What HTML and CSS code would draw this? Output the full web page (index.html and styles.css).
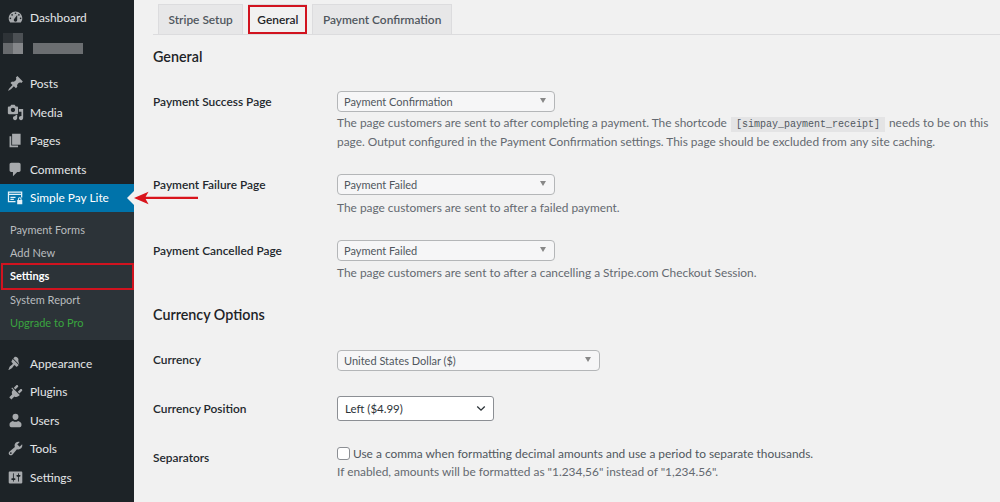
FILE: index.html
```html
<!DOCTYPE html>
<html lang="en">
<head>
  <meta charset="UTF-8" />
  <title>Simple Pay Lite Settings</title>
  <link rel="stylesheet" href="styles.css">
</head>
<body>
  <div class="layout">
    <aside class="sidebar">
      <ul class="menu menu-top">
        <li><svg class="icon" viewBox="0 0 20 20"><path fill-rule="evenodd" d="M3.76 16h12.48c1.1-1.37 1.76-3.11 1.76-5 0-4.42-3.58-8-8-8s-8 3.58-8 8c0 1.89.66 3.63 1.76 5zM10 4c.55 0 1 .45 1 1s-.45 1-1 1-1-.45-1-1 .45-1 1-1zM6 6c.55 0 1 .45 1 1s-.45 1-1 1-1-.45-1-1 .45-1 1-1zm8 0c.55 0 1 .45 1 1s-.45 1-1 1-1-.45-1-1 .45-1 1-1zm-5.370 5.550L12 7v6c0 1.100-.9 2-2 2s-2-.9-2-2c0-.57.24-1.080.63-1.450zM4 10c.55 0 1 .45 1 1s-.45 1-1 1-1-.45-1-1 .45-1 1-1zm12 0c.55 0 1 .45 1 1s-.45 1-1 1-1-.45-1-1 .45-1 1-1z"/></svg>Dashboard</li>
      </ul>
      <div class="blurred"><span class="blur-a"></span><span class="blur-b"></span><span class="blur-c"></span></div>
      <ul class="menu">
        <li><svg class="icon" viewBox="0 0 20 20"><path d="M10.440 3.020l1.820-1.820 6.360 6.350-1.830 1.820c-1.050-.68-2.480-.57-3.410.36l-.75.75c-.92.93-1.040 2.350-.35 3.410l-1.830 1.820-2.410-2.410-2.800 2.790c-.42.42-3.380 2.710-3.800 2.290s1.860-3.390 2.280-3.810l2.790-2.790L4.100 9.360l1.830-1.820c1.050.69 2.480.57 3.400-.36l.75-.75c.93-.92 1.050-2.350.36-3.410z"/></svg>Posts</li>
        <li><svg class="icon" viewBox="0 0 20 20"><path fill-rule="evenodd" d="M13 11V4c0-.55-.45-1-1-1h-1.670L9 1H5L3.670 3H2c-.55 0-1 .45-1 1v7c0 .55.45 1 1 1h10c.55 0 1-.45 1-1zM7 4.500c1.380 0 2.500 1.120 2.500 2.500S8.380 9.500 7 9.500 4.500 8.380 4.500 7 5.620 4.500 7 4.500z"/><path d="M14 6h5v10.500c0 1.380-1.120 2.500-2.500 2.500S14 17.880 14 16.500s1.120-2.500 2.500-2.500c.17 0 .34.020.5.050V9h-3V6zm-4 8.050V13h2v3.500c0 1.380-1.120 2.500-2.500 2.500S7 17.880 7 16.500 8.120 14 9.500 14c.17 0 .34.020.5.050z"/></svg>Media</li>
        <li><svg class="icon" viewBox="0 0 20 20"><path d="M6 15V2h10v13H6zm-1 1h8v2H3V5h2v11z"/></svg>Pages</li>
        <li><svg class="icon" viewBox="0 0 20 20"><path d="M5 2h9c1.100 0 2 .9 2 2v7c0 1.100-.9 2-2 2h-2l-5 5v-5H5c-1.100 0-2-.9-2-2V4c0-1.100.9-2 2-2z"/></svg>Comments</li>
        <li class="current"><svg class="icon" viewBox="0 0 20 20"><path fill-rule="evenodd" d="M1 3h17v7h-1.500V7h-14v7H10v1.500H1zm1.500 1.500v1h14v-1zM4 9h6v1.500H4zm0 2.500h4V13H4z"/><path fill-rule="evenodd" d="M12 13h.8v-1a2.200 2.200 0 0 1 4.400 0v1h.8v5h-6zm2-1v1h2v-1a1 1 0 0 0-2 0z"/></svg>Simple Pay Lite</li>
      </ul>
      <ul class="submenu">
        <li>Payment Forms</li>
        <li>Add New</li>
        <li class="active">Settings</li>
        <li>System Report</li>
        <li class="upgrade">Upgrade to Pro</li>
      </ul>
      <ul class="menu menu-bottom">
        <li><svg class="icon" viewBox="0 0 20 20"><path d="M14.480 11.060L7.410 3.990l1.500-1.500c.5-.56 2.300-.47 3.540.77 1.210 1.210 1.320 3.030.77 3.540zM6.700 4.700l7.070 7.070-1.770 1.770c-.39.39-1.020.39-1.410 0L9.530 12.480c-.39-.39-1.030-.39-1.420 0-.6.6-1.110 1.430-1.690 2.210-.26.35-.53.7-.84 1.010C4.500 16.800 3 17.400 1.500 17.500c1-1.500 1-3 1.800-4.100.31-.31.66-.58 1.010-.84.78-.58 1.610-1.090 2.210-1.690.39-.39.39-1.030 0-1.420L5.460 8.390c-.39-.39-.39-1.020 0-1.410z"/></svg>Appearance</li>
        <li><svg class="icon" viewBox="0 0 20 20"><path d="M13.110 4.360L9.870 7.600 8 5.730l3.240-3.240c.35-.34 1.050-.2 1.560.32.52.51.66 1.210.31 1.550zM17.800 9.050l-3.240 3.240-1.870-1.870 3.240-3.240c.34-.35 1.040-.21 1.550.31.52.51.66 1.210.32 1.560zM5.110 6.130l.91-.91 9.010 9.010-.91.91c-1.420 1.420-3.860 1.680-5.440.7l-3.530 3.530-2.490-2.490 3.530-3.530c-.98-1.580-.72-4.020.92-5.220z"/></svg>Plugins</li>
        <li><svg class="icon" viewBox="0 0 20 20"><path d="M10 2a3.500 3.500 0 0 1 3.500 3.500c0 2-1.300 4-3.500 4s-3.500-2-3.500-4A3.500 3.500 0 0 1 10 2zM3 16v-2c0-1.500 2-3 4-3.500.8.700 1.800 1 3 1s2.200-.3 3-1c2 .5 4 2 4 3.500v2c0 1-1 2-2 2H5c-1 0-2-1-2-2z"/></svg>Users</li>
        <li><svg class="icon" viewBox="0 0 20 20"><path fill-rule="evenodd" d="M16.680 9.770c-1.340 1.340-3.300 1.670-4.950.99l-5.410 6.520c-.99.99-2.590.99-3.570 0-.99-.98-.99-2.580 0-3.570l6.520-5.420c-.68-1.650-.35-3.610.99-4.950 1.280-1.280 3.120-1.620 4.720-1.060l-2.890 2.890 2.820 2.820 2.860-2.870c.53 1.580.18 3.400-1.090 4.670zM3.810 16.210c.4.390 1.030.39 1.420 0 .4-.4.4-1.030 0-1.430-.39-.39-1.020-.39-1.420 0a1.020 1.020 0 0 0 0 1.430z"/></svg>Tools</li>
        <li><svg class="icon" viewBox="0 0 20 20"><path fill-rule="evenodd" d="M18 16V4c0-.55-.45-1-1-1H3c-.55 0-1 .45-1 1v12c0 .55.45 1 1 1h14c.55 0 1-.45 1-1zM8 11h1c.55 0 1 .45 1 1s-.45 1-1 1H8v1.500c0 .28-.22.5-.5.5s-.5-.22-.5-.5V13H6c-.55 0-1-.45-1-1s.45-1 1-1h1V5.500c0-.28.22-.5.5-.5s.5.22.5.5V11zm5-2h-1c-.55 0-1-.45-1-1s.45-1 1-1h1V5.500c0-.28.22-.5.5-.5s.5.22.5.5V7h1c.55 0 1 .45 1 1s-.45 1-1 1h-1v5.500c0 .28-.22.5-.5.5s-.5-.22-.5-.5V9z"/></svg>Settings</li>
      </ul>
    </aside>

    <main class="content">
      <nav class="tabs">
        <span class="tab">Stripe Setup</span>
        <span class="tab tab-active">General</span>
        <span class="tab">Payment Confirmation</span>
      </nav>

      <h2 class="section-title first">General</h2>

      <div class="row row-success">
        <div class="label">Payment Success Page</div>
        <div class="field">
          <div class="select2 short">Payment Confirmation<i></i></div>
          <p class="desc">The page customers are sent to after completing a payment. The shortcode <code>[simpay_payment_receipt]</code> needs to be on this page. Output configured in the Payment Confirmation settings. This page should be excluded from any site caching.</p>
        </div>
      </div>
      <div class="row row-failure">
        <div class="label">Payment Failure Page</div>
        <div class="field">
          <div class="select2 short">Payment Failed<i></i></div>
          <p class="desc">The page customers are sent to after a failed payment.</p>
        </div>
      </div>
      <div class="row row-cancel">
        <div class="label">Payment Cancelled Page</div>
        <div class="field">
          <div class="select2 short">Payment Failed<i></i></div>
          <p class="desc">The page customers are sent to after a cancelling a Stripe.com Checkout Session.</p>
        </div>
      </div>

      <h2 class="section-title">Currency Options</h2>

      <div class="row row-currency">
        <div class="label">Currency</div>
        <div class="field"><div class="select2 long">United States Dollar ($)<i></i></div></div>
      </div>
      <div class="row row-position">
        <div class="label">Currency Position</div>
        <div class="field">
          <div class="native-select">Left ($4.99)
            <svg viewBox="0 0 12 8"><path d="M1.500 1.500 6 6l4.500-4.500" fill="none" stroke="#2c3338" stroke-width="1.600"/></svg>
          </div>
        </div>
      </div>
      <div class="row row-separators">
        <div class="label">Separators</div>
        <div class="field">
          <div class="check-line"><span class="checkbox"></span>Use a comma when formatting decimal amounts and use a period to separate thousands.</div>
          <p class="desc">If enabled, amounts will be formatted as "1.234,56" instead of "1,234.56".</p>
        </div>
      </div>
    </main>
  </div>

  <!-- red callouts drawn over the screenshot -->
  <span class="callout callout-tab"></span>
  <span class="callout callout-settings"></span>
  <svg class="arrow" viewBox="0 0 66 16"><path d="M0 8 15 1.500 12 6.800H66V9H12l3 5.500z" fill="#d9141c"/></svg>
</body>
</html>
```

FILE: styles.css
```css
* {
  box-sizing: border-box;
}

html,
body {
  height: 502px;
  overflow: hidden;
}

body {
  margin: 0;
  background-color: #f1f1f1;
  font-family: Lato, sans-serif;
  font-size: 11.9px;
  color: #3c434a;
}

ul {
  list-style: none;
  margin: 0;
  padding: 0;
}

.layout {
  display: flex;
  height: 502px;
}

/* sidebar */
.sidebar {
  width: 134px;
  flex-shrink: 0;
  background-color: #1d2327;
  color: #e4e6e7;
}

.menu li {
  display: flex;
  align-items: center;
  height: 28.5px;
  padding-left: 7px;
}

.menu-top {
  padding-top: 3px;
}

.icon {
  width: 17px;
  height: 17px;
  margin-right: 6px;
  fill: #a7aaad;
  flex-shrink: 0;
}

.blurred {
  height: 38px;
  padding: 1px 3px 0;
  display: flex;
  align-items: flex-start;
}

.blurred span {
  display: block;
}

.blur-a {
  width: 10px;
  height: 21px;
  background: linear-gradient(#2e3337 48%, #676a6d 48%);
}

.blur-b {
  width: 10px;
  height: 21px;
  background: linear-gradient(#4c5054 48%, #85878a 48%);
}

.blur-c {
  width: 50px;
  height: 11px;
  margin: 10px 0 0 10px;
  background-color: #6b6e71;
}

.menu .current {
  background-color: #0073aa;
  color: #fff;
  position: relative;
}

.menu .current .icon {
  fill: #e4f1f7;
}

.menu .current::after {
  content: "";
  position: absolute;
  right: 0;
  top: 50%;
  margin-top: -7px;
  border: 7px solid transparent;
  border-right-color: #f1f1f1;
  border-left-width: 0;
}

.submenu {
  background-color: #2c3338;
  padding: 6px 0 6px;
}

.submenu li {
  height: 23.2px;
  line-height: 23.2px;
  padding-left: 10px;
  font-size: 11px;
  color: #b9bcbf;
}

.submenu .active {
  color: #fff;
  font-weight: 700;
}

.submenu .upgrade {
  color: #3aa53f;
}

.menu-bottom {
  padding-top: 9px;
}

/* main column */
.content {
  flex: 1;
  padding: 4px 0 0 19px;
  min-width: 0;
}

.tabs {
  display: flex;
  gap: 5px;
  height: 31px;
  padding-left: 5px;
  border-bottom: 1px solid #dcdcde;
}

.tab {
  height: 30px;
  padding: 0 9.5px;
  line-height: 30px;
  background-color: #e7e7e8;
  border: 1px solid #dcdcde;
  border-bottom: 0;
  color: #50575e;
  font-weight: 600;
}

.tab-active {
  padding: 0 8px;
  background-color: #f1f1f1;
  color: #1d2327;
}

.section-title {
  margin: 0;
  font-size: 14.3px;
  font-weight: 600;
  color: #1d2327;
  line-height: 20px;
}

.section-title.first {
  margin-top: 12px;
}

.section-title:not(.first) {
  margin-top: 23px;
}

.row {
  display: flex;
}

.label {
  width: 184px;
  flex-shrink: 0;
  font-weight: 600;
  color: #23282d;
  line-height: 20px;
}

.field {
  min-width: 0;
  flex: 1;
  padding-right: 4px;
}

.row-success {
  margin-top: 24px;
}

.row-success .label,
.row-failure .label,
.row-cancel .label {
  padding-top: 1px;
}

.row-failure {
  margin-top: 23px;
}

.row-failure .desc {
  padding-top: 3px;
}

.row-cancel {
  margin-top: 23px;
}

.row-cancel .desc {
  padding-top: 2px;
}

.row-currency {
  margin-top: 25px;
}

.row-position {
  margin-top: 25px;
}

.row-position .label {
  padding-top: 3px;
}

.row-separators {
  margin-top: 24px;
}

.row-separators .label {
  padding-top: 3px;
}

.row-separators .desc {
  padding-top: 0;
}

.select2 {
  position: relative;
  height: 21px;
  line-height: 20px;
  padding-left: 6px;
  font-size: 11px;
  color: #50575e;
  background-color: #f6f6f7;
  border: 1px solid #b4b6b8;
  border-radius: 4px;
}

.select2 i {
  position: absolute;
  right: 8px;
  top: 6px;
  border: 3px solid transparent;
  border-top: 5px solid #888;
  border-bottom: 0;
}

.short {
  width: 218px;
}

.long {
  width: 263px;
}

.native-select {
  display: flex;
  align-items: center;
  justify-content: space-between;
  width: 157px;
  height: 25px;
  padding: 0 7px;
  background-color: #fff;
  border: 1px solid #8c8f94;
  border-radius: 3px;
  font-size: 11.5px;
  color: #2c3338;
}

.native-select svg {
  width: 10px;
  height: 7px;
}

.desc {
  margin: 0;
  padding-top: 1px;
  line-height: 19px;
  color: #646970;
}

.desc code {
  font-family: 'Liberation Mono', monospace;
  font-size: 10px;
  line-height: 1;
  background-color: #e4e4e5;
  padding: 2px 5px;
  margin: 0 1px;
  color: #50575e;
}

.check-line {
  display: flex;
  align-items: center;
  height: 17px;
  color: #50575e;
}

.checkbox {
  width: 13px;
  height: 13px;
  margin-right: 3px;
  background-color: #fff;
  border: 1px solid #8c8f94;
  border-radius: 3px;
}

/* annotations */
.callout {
  position: absolute;
  border: 2px solid #d1131f;
}

.callout-tab {
  left: 248px;
  top: 5px;
  width: 59px;
  height: 29px;
}

.callout-settings {
  left: 1px;
  top: 263px;
  width: 133px;
  height: 27px;
}

.arrow {
  position: absolute;
  left: 134px;
  top: 190px;
  width: 64px;
  height: 16px;
}
```
